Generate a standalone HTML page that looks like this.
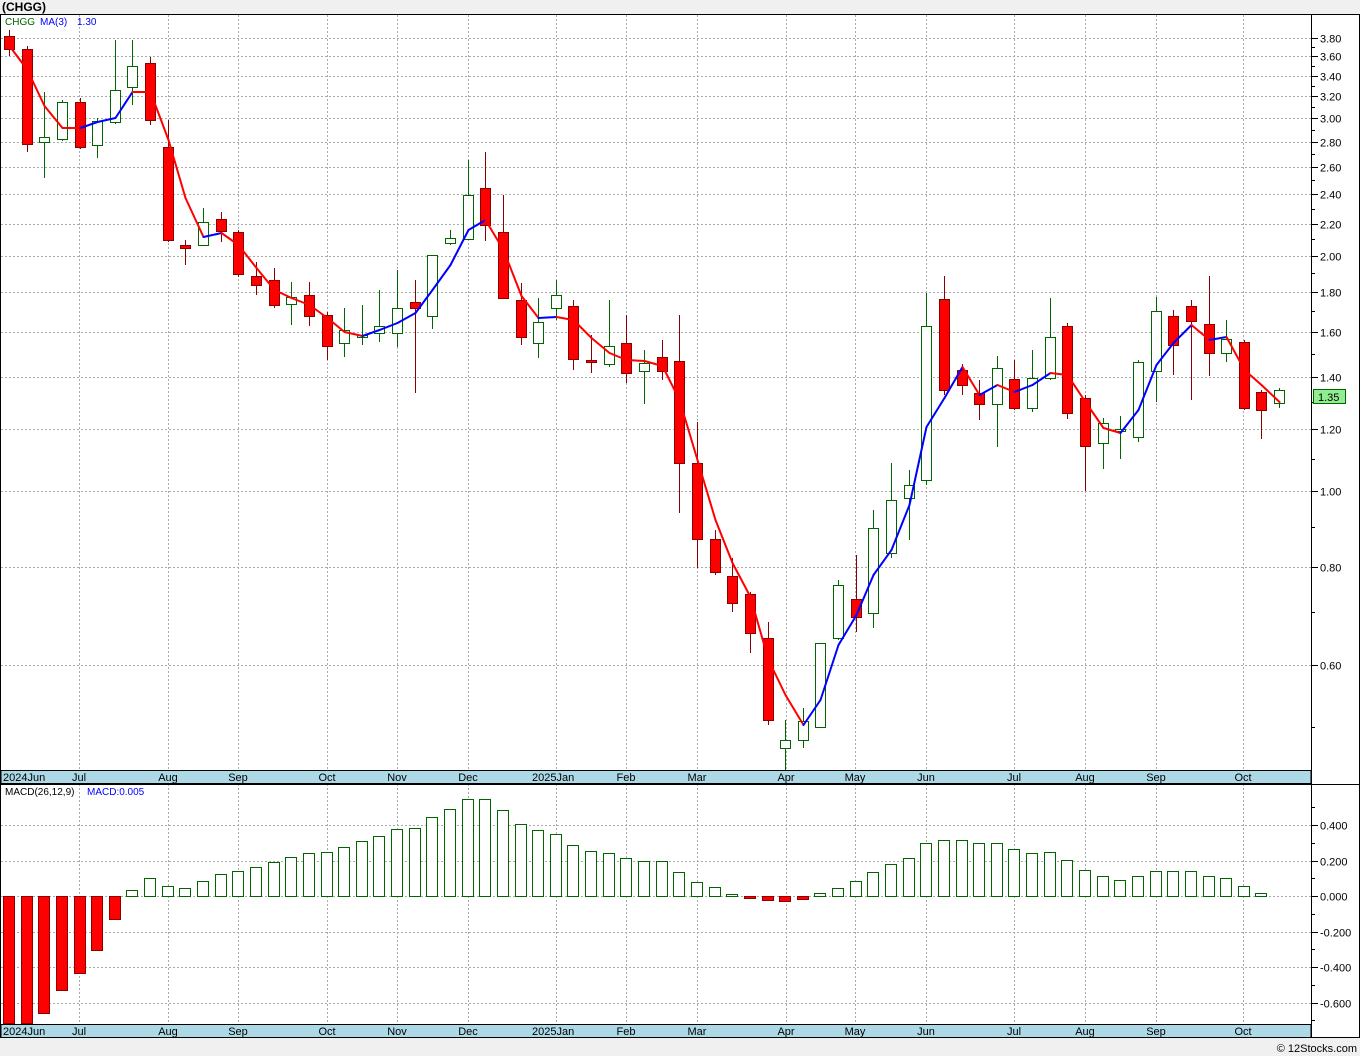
<!DOCTYPE html>
<html><head><meta charset="utf-8"><style>
html,body{margin:0;padding:0;background:#f0f0f0;}
body{width:1360px;height:1056px;overflow:hidden;font-family:"Liberation Sans","DejaVu Sans",sans-serif;}
svg{display:block}
</style></head><body>
<svg id="c" width="1360" height="1056" xmlns="http://www.w3.org/2000/svg" font-family="Liberation Sans, DejaVu Sans, sans-serif">
<rect x="0" y="0" width="1360" height="1056" fill="#f0f0f0"/>
<text x="2" y="11" font-size="12" font-weight="bold" fill="#000">(CHGG)</text>
<rect x="0.5" y="14.5" width="1359" height="1023" fill="#fff" stroke="#000"/>
<g id="g"></g>
<text x="1357" y="1052" font-size="11" fill="#000" text-anchor="end">© 12Stocks.com</text>
</svg>
<script>
const NS="http://www.w3.org/2000/svg",G=document.getElementById('g');
function el(t,a,txt){const e=document.createElementNS(NS,t);for(const k in a)e.setAttribute(k,a[k]);if(txt!==undefined)e.textContent=txt;G.appendChild(e);return e;}
const py=p=>38+(Math.log(3.8)-Math.log(p))*339.6;
const my=v=>896-v*177.5;
const mx=[79,168,238,327,397,468,556,626,697,786,855,926,1014,1085,1156,1243];
mx.forEach(x=>{el('line',{x1:x+.5,y1:15,x2:x+.5,y2:770,stroke:'#aaa','stroke-dasharray':'2,2'});el('line',{x1:x+.5,y1:784,x2:x+.5,y2:1024,stroke:'#aaa','stroke-dasharray':'2,2'});});
const pl=[3.8,3.6,3.4,3.2,3.0,2.8,2.6,2.4,2.2,2.0,1.8,1.6,1.4,1.2,1.0,0.8,0.6];
pl.forEach(p=>{const y=Math.round(py(p))+.5;el('line',{x1:1,y1:y,x2:1311,y2:y,stroke:'#aaa','stroke-dasharray':'2,2'});el('line',{x1:1311,y1:y,x2:1318,y2:y,stroke:'#000'});el('text',{x:1320,y:y+4,'font-size':11,fill:'#000'},p.toFixed(2));});
for(let p=0.5;p<=3.9;p+=0.1){const y=Math.round(py(p))+.5;if(y>16&&y<769)el('line',{x1:1311,y1:y,x2:1315,y2:y,stroke:'#000'});}
[0.4,0.2,0,-0.2,-0.4,-0.6].forEach(v=>{const y=Math.round(my(v))+.5;el('line',{x1:1,y1:y,x2:1311,y2:y,stroke:'#aaa','stroke-dasharray':'2,2'});el('line',{x1:1311,y1:y,x2:1318,y2:y,stroke:'#000'});el('text',{x:1320,y:y+4,'font-size':11,fill:'#000'},(v<0?'-':'')+Math.abs(v).toFixed(3));});
for(let v=-0.7;v<=0.55;v+=0.1){const y=Math.round(my(v))+.5;if(y>786&&y<1022)el('line',{x1:1311,y1:y,x2:1315,y2:y,stroke:'#000'});}
const C=[[36,49,30,56,1],[49,144,46,152,1],[137,142,92,178,0],[102,139,100,141,0],[102,147,98,149,1],[121,145,118,158,0],[90,122,40,124,0],[66,87,40,105,0],[63,120,57,125,1],[147,240,120,242,1],[245,248,240,265,1],[222,245,208,245,0],[219,231,212,242,1],[232,274,230,277,1],[276,285,262,295,1],[280,305,268,308,1],[297,304,282,325,0],[295,316,282,326,1],[315,346,312,360,1],[330,343,308,357,0],[335,337,305,345,0],[326,333,290,342,0],[308,333,270,347,0],[302,308,280,393,1],[255,316,255,329,0],[238,243,230,245,0],[195,239,160,239,0],[188,225,152,241,1],[232,298,195,298,1],[300,337,283,345,1],[322,343,298,358,0],[295,308,280,320,0],[306,359,300,370,1],[360,362,335,373,1],[346,364,300,367,0],[343,373,315,383,1],[363,371,350,404,0],[357,371,340,380,1],[361,463,315,513,1],[463,539,422,568,1],[539,572,530,575,1],[576,603,558,612,1],[594,633,592,653,1],[638,720,622,725,1],[740,748,720,770,0],[721,740,708,748,0],[643,727,643,727,0],[585,638,580,640,0],[599,617,555,632,1],[528,613,510,628,0],[500,553,463,558,0],[485,498,470,540,0],[326,480,293,485,0],[299,390,276,395,1],[370,385,364,395,1],[393,404,380,420,1],[368,404,356,447,0],[379,408,360,410,1],[378,408,350,412,0],[337,378,298,380,0],[326,413,323,419,1],[398,446,395,491,1],[423,443,418,469,0],[429,431,416,459,0],[362,437,360,442,0],[311,371,297,402,0],[316,345,310,375,1],[306,321,300,400,1],[324,353,276,376,1],[339,353,320,362,0],[342,408,340,410,1],[392,410,390,439,1],[390,403,388,408,0]];
const X=i=>Math.round(9+17.64*i);
C.forEach((c,i)=>{const x=X(i)+.5;const col=c[4]?'#8b0000':'#006400';
el('line',{x1:x,y1:c[2],x2:x,y2:c[3],stroke:col});
el('rect',{x:x-5,y:c[0]+.5,width:10,height:Math.max(1,c[1]-c[0]),fill:c[4]?'#ff0000':'#fff',stroke:col});});
const M=[46,70,106,128,128,122,118,92,92,140,198,237,233,245,268,290,298,305,318,332,336,330,323,313,290,265,230,220,250,296,318,317,320,338,353,360,361,366,400,460,520,563,597,660,695,725,700,645,615,575,550,505,427,398,367,395,385,392,385,373,375,402,428,433,410,365,343,325,340,337,370,385,402];
for(let i=0;i<M.length-1;i++){const a=M[i],b=M[i+1];el('line',{x1:X(i)+.5,y1:a,x2:X(i+1)+.5,y2:b,stroke:b<a?'#0000ff':'#ff0000','stroke-width':2,'stroke-linecap':'round'});}
const H=[1024,1024,1013,990,973,950,919,890,878,886,888,881,874,871,867,862,857,853,852,847,841,836,829,828,817,809,799,799,810,824,830,834,845,851,853,858,861,861,872,882,887,894,898,900,901,899,893,888,881,872,864,858,843,840,840,843,843,849,853,852,860,870,876,880,876,871,871,871,876,878,886,893,896];
H.forEach((h,i)=>{const x=X(i)-5.5;if(h>896){el('rect',{x:x,y:896.5,width:11,height:Math.min(h,1023)-896,fill:'#ff0000',stroke:'#8b0000'});}else{el('rect',{x:x,y:h+.5,width:11,height:Math.max(0,896-h),fill:'#fff',stroke:'#006400'});}});
[[770],[1024]].forEach(([y])=>{el('rect',{x:1,y:y+.5,width:1310,height:13,fill:'#add8e6',stroke:'#000'});
const L=[[3,'2024Jun'],[79,'Jul'],[168,'Aug'],[238,'Sep'],[327,'Oct'],[397,'Nov'],[468,'Dec'],[532,'2025Jan'],[626,'Feb'],[697,'Mar'],[786,'Apr'],[855,'May'],[926,'Jun'],[1014,'Jul'],[1085,'Aug'],[1156,'Sep'],[1243,'Oct']];
L.forEach(([x,t])=>el('text',{x:x,y:y+11,'font-size':11,fill:'#000','text-anchor':t.length>3?'start':'middle'},t));});
el('line',{x1:0,y1:784.5,x2:1360,y2:784.5,stroke:'#000'});
el('line',{x1:1311.5,y1:15,x2:1311.5,y2:1038,stroke:'#000'});
el('text',{x:5,y:25,'font-size':10,fill:'#006400'},'CHGG');
el('text',{x:40,y:25,'font-size':10,fill:'#0000ff'},'MA(3)');
el('text',{x:77,y:25,'font-size':10,fill:'#0000ff'},'1.30');
el('text',{x:5,y:795,'font-size':10,fill:'#000'},'MACD(26,12,9)');
el('text',{x:87,y:795,'font-size':10,fill:'#0000ff'},'MACD:0.005');
el('rect',{x:1313.5,y:389.5,width:32,height:14,fill:'#90ee90',stroke:'#006400'});
el('text',{x:1318,y:401,'font-size':11,fill:'#000'},'1.35');
</script>
</body></html>
